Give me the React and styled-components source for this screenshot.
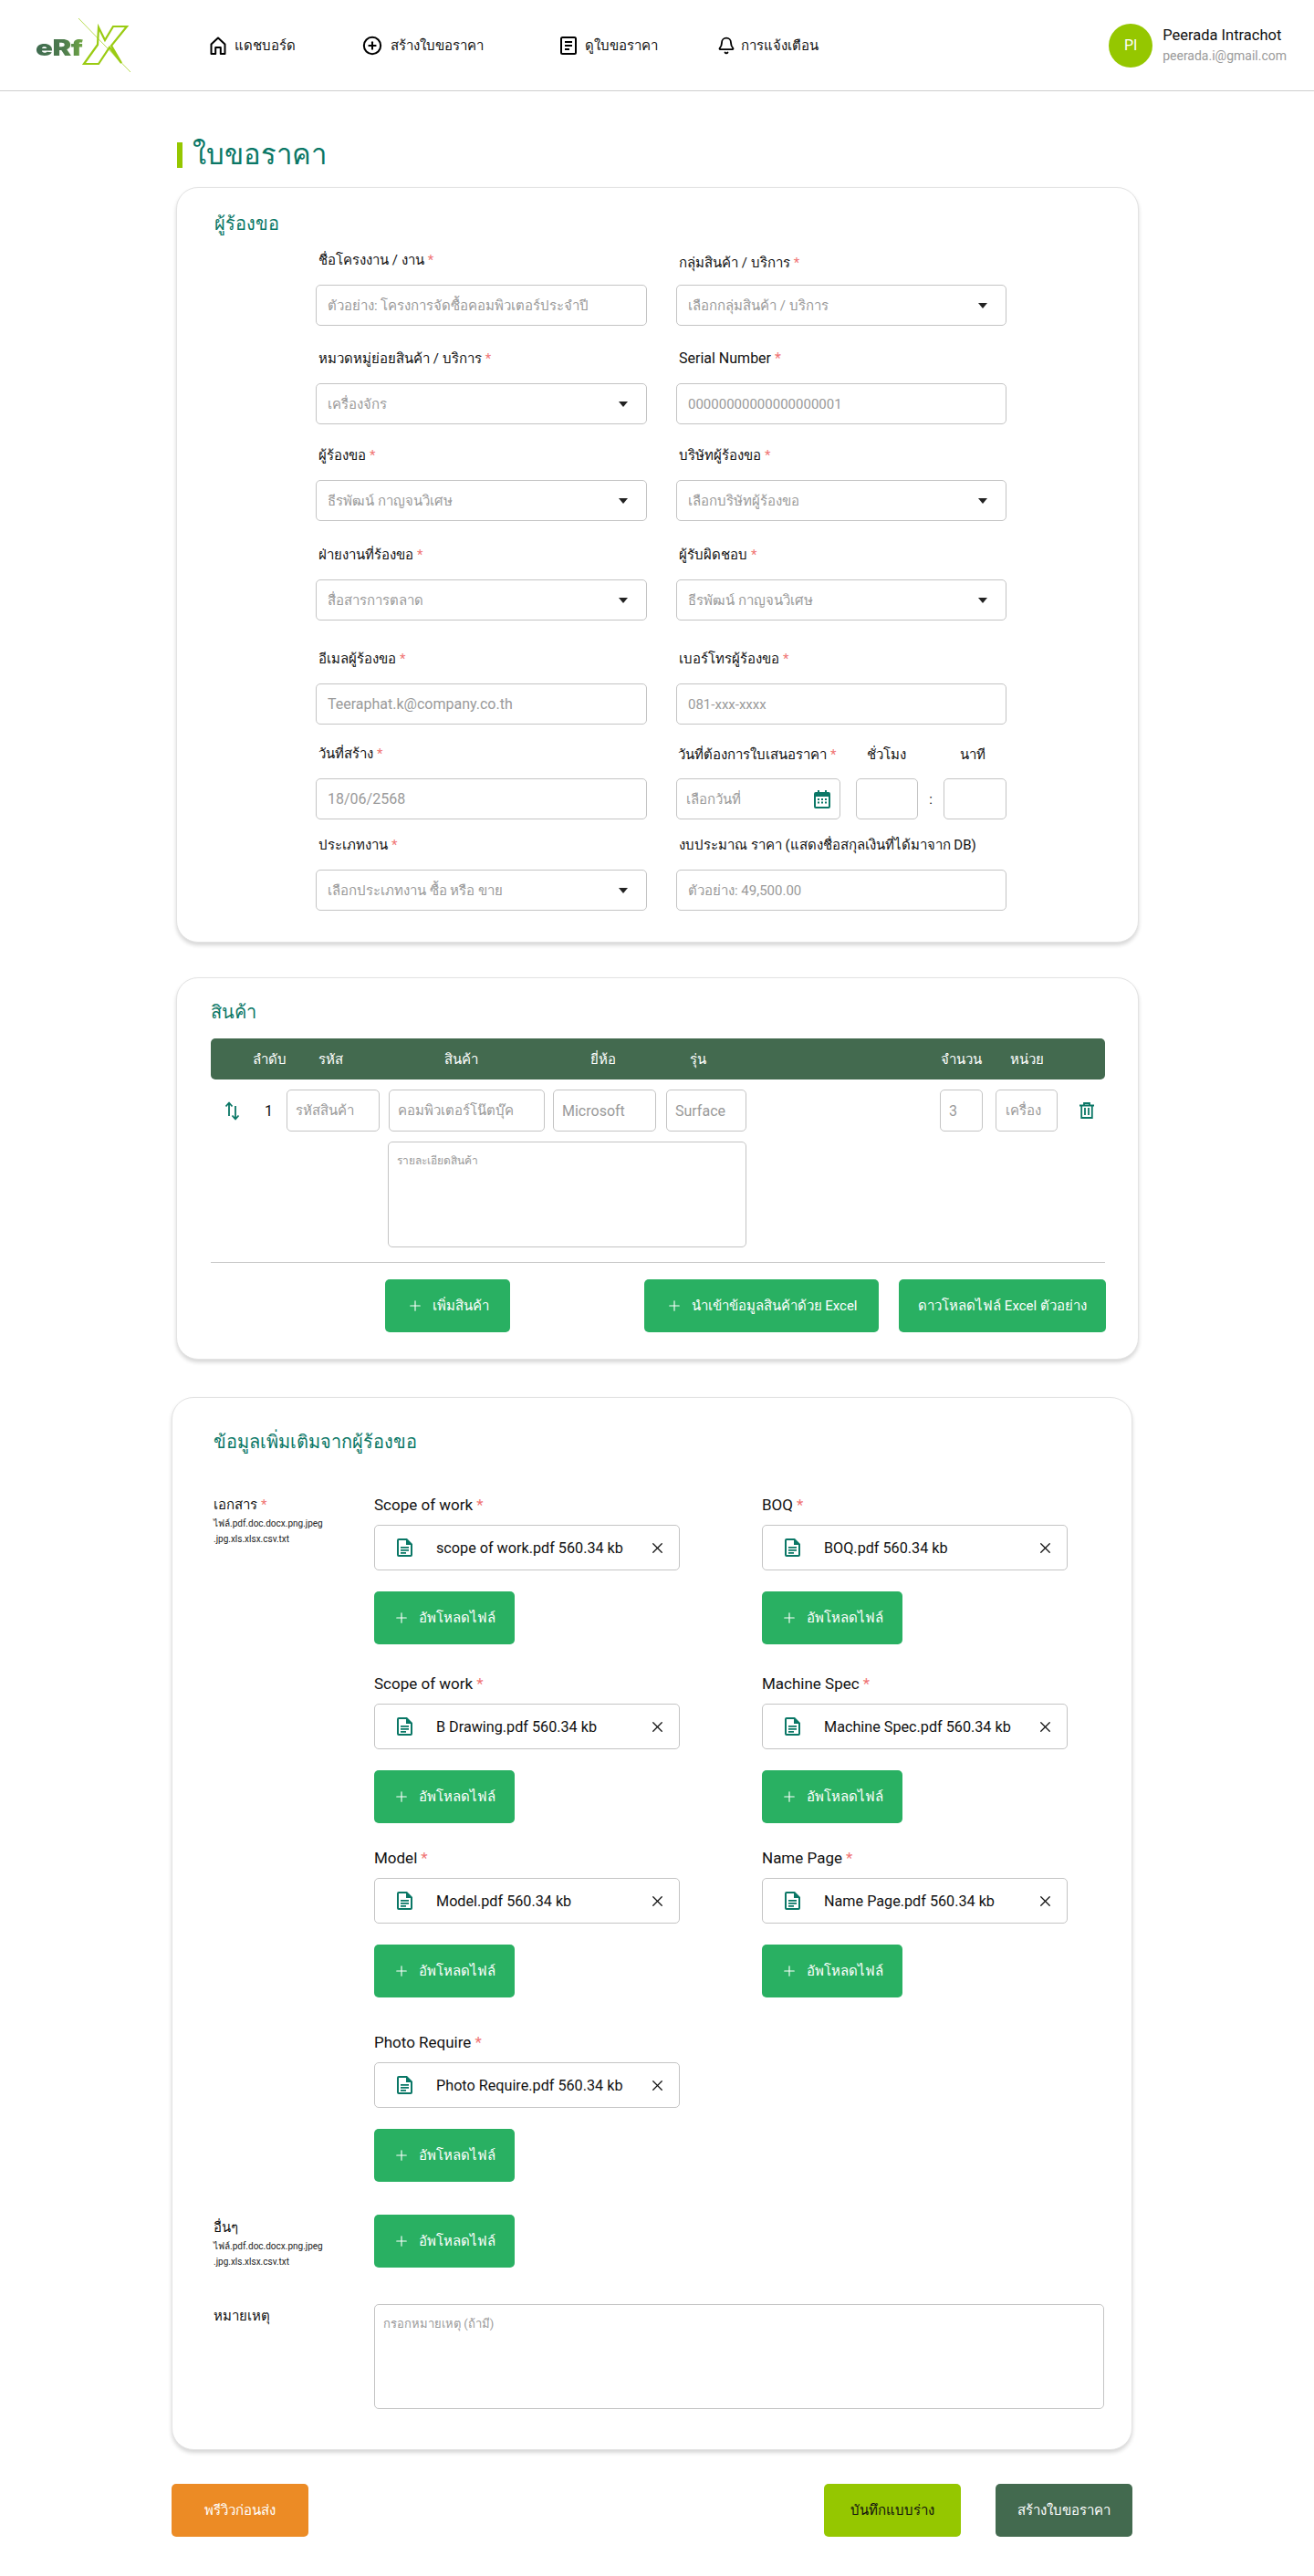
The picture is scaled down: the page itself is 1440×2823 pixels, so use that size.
import React from "react";
import styled, { createGlobalStyle } from "styled-components";
import { CirclePlus, Bell, Plus, X } from "lucide-react";

const GlobalStyle = createGlobalStyle`
  html, body { margin: 0; padding: 0; background: #fff; }
  body { font-family: Roboto, "Noto Sans", "Open Sans", "Liberation Sans", sans-serif; color: #111; font-size: 14px; }
  * { box-sizing: border-box; }
`;

const TEAL = "#0a7766";
const GREEN = "#29b062";
const DARK = "#436a4f";
const LIME = "#95c700";

const Header = styled.header`
  height: 100px; border-bottom: 1px solid #cfcfcf; display: flex; align-items: center;
  padding: 0 30px 0 39px; background: #fff;
`;
const LogoBox = styled.div`position: relative; width: 104px; height: 60px; flex: none;`;
const LogoText = styled.span`
  position: absolute; left: 0; top: 18px; font-family: Inter, sans-serif; font-weight: 900; font-size: 24px;
  line-height: 30px; letter-spacing: -0.4px; transform: scaleX(1.3); transform-origin: left center;
  background: linear-gradient(90deg, #3f6b50, #4f7d4e 60%, #6fa644);
  -webkit-background-clip: text; background-clip: text; color: transparent;
`;
const Nav = styled.nav`display: flex; align-items: center; margin-left: 87px; flex: 1;`;
const NavItem = styled.a`
  display: flex; align-items: center; gap: ${p => p.$gap || 9}px; width: ${p => p.$w}px;
  font-size: 15px; color: #111; white-space: nowrap;
`;
const User = styled.div`display: flex; align-items: center; gap: 11px;`;
const Avatar = styled.div`
  width: 48px; height: 48px; border-radius: 50%; background: ${LIME}; color: #fff;
  display: flex; align-items: center; justify-content: center; font-size: 16px;
`;
const UserName = styled.div`font-size: 16.5px; line-height: 22px; color: #111;`;
const UserMail = styled.div`font-size: 14px; line-height: 22px; color: #9a9a9a;`;

const Main = styled.main`width: 1055px; margin: 0 0 0 193px; padding-bottom: 44px;`;
const PageTitle = styled.h1`
  margin: 0; padding: 50px 0 16px 0; display: flex; align-items: center; gap: 11px;
  font-size: 31px; font-weight: 400; color: ${TEAL}; line-height: 39px;
  &::before { content: ""; width: 6px; height: 28px; background: ${LIME}; margin-left: 1px; }
`;
const Card = styled.section`
  background: #fff; border: 1px solid #e3e3e3; border-radius: 24px;
  box-shadow: 0 3px 4px rgba(0,0,0,.16);
  padding: ${p => p.$pad};
  margin: ${p => p.$margin || 0};
`;
const SectionTitle = styled.h2`
  margin: 0; font-size: 20px; line-height: 30px; font-weight: 400; color: ${TEAL};
`;
const FormGrid = styled.div`
  margin: 12px 0 0 111px; width: 757px; display: grid; grid-template-columns: 363px 362px; column-gap: 32px;
  grid-template-rows: 85px 108px 106px 109px 114px 104px 100px;
`;
const Field = styled.div`display: flex; flex-direction: column; justify-content: flex-end; min-width: 0;`;
const Label = styled.label`
  display: block; font-size: ${p => p.$fs || 15}px; line-height: 24px; color: #111; padding-left: ${p => p.$pl ?? 3}px;
  margin-bottom: ${p => p.$mb ?? 15}px; white-space: nowrap;
`;
const Req = styled.span`color: #f07575; margin-left: 4px;`;
const Box = styled.div`
  height: ${p => p.$h || 45}px; width: ${p => (p.$w ? p.$w + "px" : "auto")};
  border: 1px solid #c4c4c4; border-radius: 5px; background: #fff; color: #9a9a9a;
  font-size: ${p => p.$fs || 15}px; padding: 0 ${p => p.$px ?? 12}px; display: flex; align-items: center;
  justify-content: space-between; white-space: nowrap; overflow: hidden; flex: ${p => p.$flex || "none"};
`;
const TextBox = styled(Box)`
  align-items: flex-start; padding-top: 10px; font-size: ${p => p.$fs || 13}px;
`;
const Caret = styled.span`
  width: 0; height: 0; border-left: 5.5px solid transparent; border-right: 5.5px solid transparent;
  border-top: 6px solid #222; margin-right: 8px; flex: none;
`;
const DateLabels = styled.div`display: flex; margin-bottom: 14px;`;
const DateLabelCell = styled.span`
  font-size: 15px; line-height: 24px; width: ${p => p.$w}px; white-space: nowrap; padding-left: ${p => p.$pl || 0}px; flex: none;
`;
const TimeRow = styled.div`display: flex; align-items: center;`;
const Colon = styled.span`width: 28px; text-align: center; color: #111; font-size: 15px; flex: none;`;

const TableHead = styled.div`
  margin-top: 14px; height: 45px; background: ${DARK}; border-radius: 5px; position: relative; color: #fff;
  display: grid; align-items: center; font-size: 15px;
  grid-template-columns: 46px 72px 138px 160px 109px 275px 76px 1fr;
`;
const HeadCell = styled.span`white-space: nowrap;`;
const ItemCells = styled.div`display: flex; align-items: center; height: 46px; margin-top: 11px;`;
const ArrowSlot = styled.span`width: 59px; padding-left: 15px; color: ${TEAL}; display: flex; flex: none;`;
const RowNum = styled.span`width: 24px; font-size: 16px; flex: none;`;
const Spacer = styled.span`width: ${p => p.$w}px; flex: none;`;
const TrashSlot = styled.span`margin-left: 24px; color: ${TEAL}; display: flex;`;
const Divider = styled.hr`border: 0; border-top: 1px solid #c8c8c8; margin: 16px 0 18px;`;
const DescWrap = styled.div`margin: 11px 0 0 194px;`;
const ActionRow = styled.div`display: flex;`;
const GreenButton = styled.button`
  height: 58px; width: ${p => p.$w}px; margin-left: ${p => p.$ml || 0}px; background: ${GREEN}; color: #fff; border: 0; border-radius: 5px;
  font: inherit; font-size: 15px; display: flex; align-items: center; justify-content: center; gap: 10px; padding: 0; white-space: nowrap; flex: none;
`;
const DocRow = styled.div`display: flex; margin-top: ${p => p.$mt}px;`;
const SideLabel = styled.div`width: 176px; flex: none; padding-top: ${p => p.$pt || 0}px;`;
const SideTitle = styled.div`font-size: 15px; line-height: 24px;`;
const SideHint = styled.div`font-size: 10px; line-height: 17px; color: #222; white-space: nowrap;`;
const DocGrid = styled.div`
  display: grid; grid-template-columns: 335px 335px; column-gap: 90px; grid-auto-rows: 165px;
`;
const DocCell = styled.div`margin-top: ${p => p.$mt || 0}px;`;
const DocLabel = styled.div`font-size: 17px; line-height: 24px; white-space: nowrap;`;
const FileBox = styled.div`
  height: 50px; margin: 10px 0 23px; border: 1px solid #c4c4c4; border-radius: 5px; display: flex; align-items: center;
  padding: 0 14px 0 24px; font-size: 16.2px; color: #111; white-space: nowrap;
`;
const FileName = styled.span`margin-left: 26px; flex: 1;`;
const Footer = styled.div`display: flex; margin: 37px 7px 0 -5px; gap: 38px;`;
const FooterButton = styled.button`
  height: 58px; width: 150px; border: 0; border-radius: 5px; font: inherit; font-size: 15px; padding: 0;
  background: ${p => p.$bg}; color: ${p => p.$fg || "#fff"}; margin-right: ${p => p.$mr || 0};
`;

const IconHome = () => (
  <svg width="18" height="20" viewBox="0 0 18 20" fill="none" stroke="#000" strokeWidth="2" strokeLinejoin="round">
    <path d="M1.5 8.5 9 1.5l7.5 7V19h-4.700v-7H6.200v7H1.500z" />
  </svg>
);
const IconDoc = () => (
  <svg width="18" height="20" viewBox="0 0 18 20" fill="none" stroke="#000" strokeWidth="2">
    <rect x="1" y="1" width="16" height="18" rx="1.5" />
    <path d="M5 6h8M5 10h8M5 14h5" />
  </svg>
);
const IconCalendar = () => (
  <svg width="18" height="20" viewBox="0 0 18 20" fill={TEAL}>
    <path d="M4 0h2v2h6V0h2v2h2a2 2 0 0 1 2 2v14a2 2 0 0 1-2 2H2a2 2 0 0 1-2-2V4a2 2 0 0 1 2-2h2zM2 7v11h14V7z" />
    <path d="M4 9h2v2H4zM8 9h2v2H8zM12 9h2v2h-2zM4 12.5h2v2H4zM8 12.5h2v2H8zM12 12.5h2v2h-2z" />
  </svg>
);
const IconArrows = () => (
  <svg width="17" height="21" viewBox="0 0 17 21" fill="none" stroke={TEAL} strokeWidth="1.8" strokeLinejoin="round">
    <path d="M5 16V2M1.5 5.5 5 1.5l3.500 4" />
    <path d="M12 5v14M8.500 15.500 12 19.500l3.500-4" />
  </svg>
);
const IconTrash = () => (
  <svg width="16" height="18" viewBox="0 0 16 18" fill="none" stroke={TEAL} strokeWidth="1.800">
    <path d="M0 3.500h16M5 3.500V1h6v2.500" />
    <path d="M2.200 3.500V17h11.600V3.500" />
    <path d="M6 6v8M10 6v8" />
  </svg>
);
const IconFile = () => (
  <svg width="17" height="20" viewBox="0 0 17 20">
    <path fill={TEAL} fillRule="evenodd" d="M2 0h9l6 6v12a2 2 0 0 1-2 2H2a2 2 0 0 1-2-2V2a2 2 0 0 1 2-2zm0 2v16h13V7h-5V2z" />
    <path fill={TEAL} d="M4 9h9v1.800H4zM4 12h9v1.800H4zM4 15h6v1.800H4z" />
  </svg>
);
const LogoX = () => (
  <svg width="104" height="60" viewBox="39 20 104 60" style={{ position: "absolute", left: 0, top: 0 }} fill="none">
    <path d="M86 20 143 79" stroke="#a8d42a" strokeWidth=".8" />
    <path d="M108 30 115 44 124 29 139 29 122 50 133 69 120 52 108 70 92 70 107 49z" stroke="#9acb12" strokeWidth="2.200" strokeLinejoin="miter" />
  </svg>
);

const Star = () => <Req>*</Req>;

const TextField = ({ label, req, value, mb, labelSize, valueSize }) => (
  <Field>
    <Label $mb={mb} $fs={labelSize}>{label}{req && <Star />}</Label>
    <Box $fs={valueSize}>{value}</Box>
  </Field>
);
const SelectField = ({ label, req, value, mb }) => (
  <Field>
    <Label $mb={mb}>{label}{req && <Star />}</Label>
    <Box>{value}<Caret /></Box>
  </Field>
);

const UploadButton = () => (
  <GreenButton $w={154}><Plus size={18} strokeWidth={1.5} />อัพโหลดไฟล์</GreenButton>
);
const DocItem = ({ label, req, file, mt }) => (
  <DocCell $mt={mt}>
    <DocLabel>{label}{req && <Star />}</DocLabel>
    <FileBox>
      <IconFile />
      <FileName>{file}</FileName>
      <X size={19} strokeWidth={1.6} color="#111" />
    </FileBox>
    <UploadButton />
  </DocCell>
);
const Hint = () => (
  <>
    <SideHint>ไฟล์.pdf.doc.docx.png.jpeg</SideHint>
    <SideHint>.jpg.xls.xlsx.csv.txt</SideHint>
  </>
);

export default function App() {
  return (
    <>
      <GlobalStyle />
      <Header>
        <LogoBox><LogoText>eRf</LogoText><LogoX /></LogoBox>
        <Nav>
          <NavItem $w={167}><IconHome />แดชบอร์ด</NavItem>
          <NavItem $w={217}><CirclePlus size={22} strokeWidth={2.2} color="#000" />สร้างใบขอราคา</NavItem>
          <NavItem $w={172}><IconDoc />ดูใบขอราคา</NavItem>
          <NavItem $gap={6}><Bell size={20} strokeWidth={2.2} color="#000" />การแจ้งเตือน</NavItem>
        </Nav>
        <User>
          <Avatar>PI</Avatar>
          <div>
            <UserName>Peerada Intrachot</UserName>
            <UserMail>peerada.i@gmail.com</UserMail>
          </div>
        </User>
      </Header>
      <Main>
        <PageTitle>ใบขอราคา</PageTitle>
        <Card $pad="24px 37px 34px 41px">
          <SectionTitle>ผู้ร้องขอ</SectionTitle>
          <FormGrid>
            <TextField label="ชื่อโครงงาน / งาน" req value="ตัวอย่าง: โครงการจัดซื้อคอมพิวเตอร์ประจำปี" />
            <SelectField label="กลุ่มสินค้า / บริการ" req value="เลือกกลุ่มสินค้า / บริการ" mb={12} />
            <SelectField label="หมวดหมู่ย่อยสินค้า / บริการ" req value="เครื่องจักร" />
            <TextField label="Serial Number" labelSize={16} req value="00000000000000000001" />
            <SelectField label="ผู้ร้องขอ" req value="ธีรพัฒน์ กาญจนวิเศษ" />
            <SelectField label="บริษัทผู้ร้องขอ" req value="เลือกบริษัทผู้ร้องขอ" />
            <SelectField label="ฝ่ายงานที่ร้องขอ" req value="สื่อสารการตลาด" />
            <SelectField label="ผู้รับผิดชอบ" req value="ธีรพัฒน์ กาญจนวิเศษ" />
            <TextField label="อีเมลผู้ร้องขอ" req value="Teeraphat.k@company.co.th" valueSize={16} />
            <TextField label="เบอร์โทรผู้ร้องขอ" req value="081-xxx-xxxx" />
            <TextField label="วันที่สร้าง" req value="18/06/2568" valueSize={16} />
            <Field>
              <DateLabels>
                <DateLabelCell $w={209} $pl={2}>วันที่ต้องการใบเสนอราคา<Star /></DateLabelCell>
                <DateLabelCell $w={102}>ชั่วโมง</DateLabelCell>
                <DateLabelCell>นาที</DateLabelCell>
              </DateLabels>
              <TimeRow>
                <Box $w={180} $px={10}>เลือกวันที่<IconCalendar /></Box>
                <Spacer $w={17} />
                <Box $w={68} />
                <Colon>:</Colon>
                <Box $w={69} />
              </TimeRow>
            </Field>
            <SelectField label="ประเภทงาน" req value="เลือกประเภทงาน ซื้อ หรือ ขาย" />
            <TextField label="งบประมาณ ราคา (แสดงชื่อสกุลเงินที่ได้มาจาก DB)" value="ตัวอย่าง: 49,500.00" />
          </FormGrid>
        </Card>

        <Card $pad="22px 36px 29px 37px" $margin="38px 0 0">
          <SectionTitle>สินค้า</SectionTitle>
          <TableHead>
            <span />
            <HeadCell>ลำดับ</HeadCell>
            <HeadCell>รหัส</HeadCell>
            <HeadCell>สินค้า</HeadCell>
            <HeadCell>ยี่ห้อ</HeadCell>
            <HeadCell>รุ่น</HeadCell>
            <HeadCell>จำนวน</HeadCell>
            <HeadCell>หน่วย</HeadCell>
          </TableHead>
          <ItemCells>
            <ArrowSlot><IconArrows /></ArrowSlot>
            <RowNum>1</RowNum>
            <Box $w={102} $h={46} $px={9}>รหัสสินค้า</Box>
            <Spacer $w={10} />
            <Box $w={171} $h={46} $px={9}>คอมพิวเตอร์โน๊ตบุ๊ค</Box>
            <Spacer $w={9} />
            <Box $w={113} $h={46} $px={9} $fs={16}>Microsoft</Box>
            <Spacer $w={11} />
            <Box $w={88} $h={46} $px={9} $fs={16}>Surface</Box>
            <Spacer $w={212} />
            <Box $w={47} $h={46} $px={9} $fs={16}>3</Box>
            <Spacer $w={14} />
            <Box $w={68} $h={46} $px={10}>เครื่อง</Box>
            <TrashSlot><IconTrash /></TrashSlot>
          </ItemCells>
          <DescWrap><TextBox $w={393} $h={116} $px={9} $fs={12}>รายละเอียดสินค้า</TextBox></DescWrap>
          <Divider />
          <ActionRow>
            <GreenButton $w={137} $ml={191}><Plus size={18} strokeWidth={1.5} />เพิ่มสินค้า</GreenButton>
            <GreenButton $w={257} $ml={147}><Plus size={18} strokeWidth={1.5} />นำเข้าข้อมูลสินค้าด้วย Excel</GreenButton>
            <GreenButton $w={227} $ml={22}>ดาวโหลดไฟล์ Excel ตัวอย่าง</GreenButton>
          </ActionRow>
        </Card>

        <Card $pad="33px 30px 44px 45px" $margin="41px 7px 0 -5px">
          <SectionTitle>ข้อมูลเพิ่มเติมจากผู้ร้องขอ</SectionTitle>
          <DocRow $mt={42}>
            <SideLabel>
              <SideTitle>เอกสาร<Star /></SideTitle>
              <Hint />
            </SideLabel>
            <DocGrid>
              <DocItem label="Scope of work" req file="scope of work.pdf 560.34 kb" />
              <DocItem label="BOQ" req file="BOQ.pdf 560.34 kb" />
              <DocItem label="Scope of work" req file="B Drawing.pdf 560.34 kb" mt={31} />
              <DocItem label="Machine Spec" req file="Machine Spec.pdf 560.34 kb" mt={31} />
              <DocItem label="Model" req file="Model.pdf 560.34 kb" mt={57} />
              <DocItem label="Name Page" req file="Name Page.pdf 560.34 kb" mt={57} />
              <DocItem label="Photo Require" req file="Photo Require.pdf 560.34 kb" mt={94} />
            </DocGrid>
          </DocRow>
          <DocRow $mt={130}>
            <SideLabel $pt={2}>
              <SideTitle>อื่นๆ</SideTitle>
              <Hint />
            </SideLabel>
            <UploadButton />
          </DocRow>
          <DocRow $mt={38}>
            <SideLabel $pt={1}><SideTitle>หมายเหตุ</SideTitle></SideLabel>
            <TextBox $h={115} $flex="1" $px={9} $fs={13}>กรอกหมายเหตุ (ถ้ามี)</TextBox>
          </DocRow>
        </Card>

        <Footer>
          <FooterButton $bg="#ec8b25" $mr="auto">พรีวิวก่อนส่ง</FooterButton>
          <FooterButton $bg={LIME} $fg="#111">บันทึกแบบร่าง</FooterButton>
          <FooterButton $bg={DARK}>สร้างใบขอราคา</FooterButton>
        </Footer>
      </Main>
    </>
  );
}
